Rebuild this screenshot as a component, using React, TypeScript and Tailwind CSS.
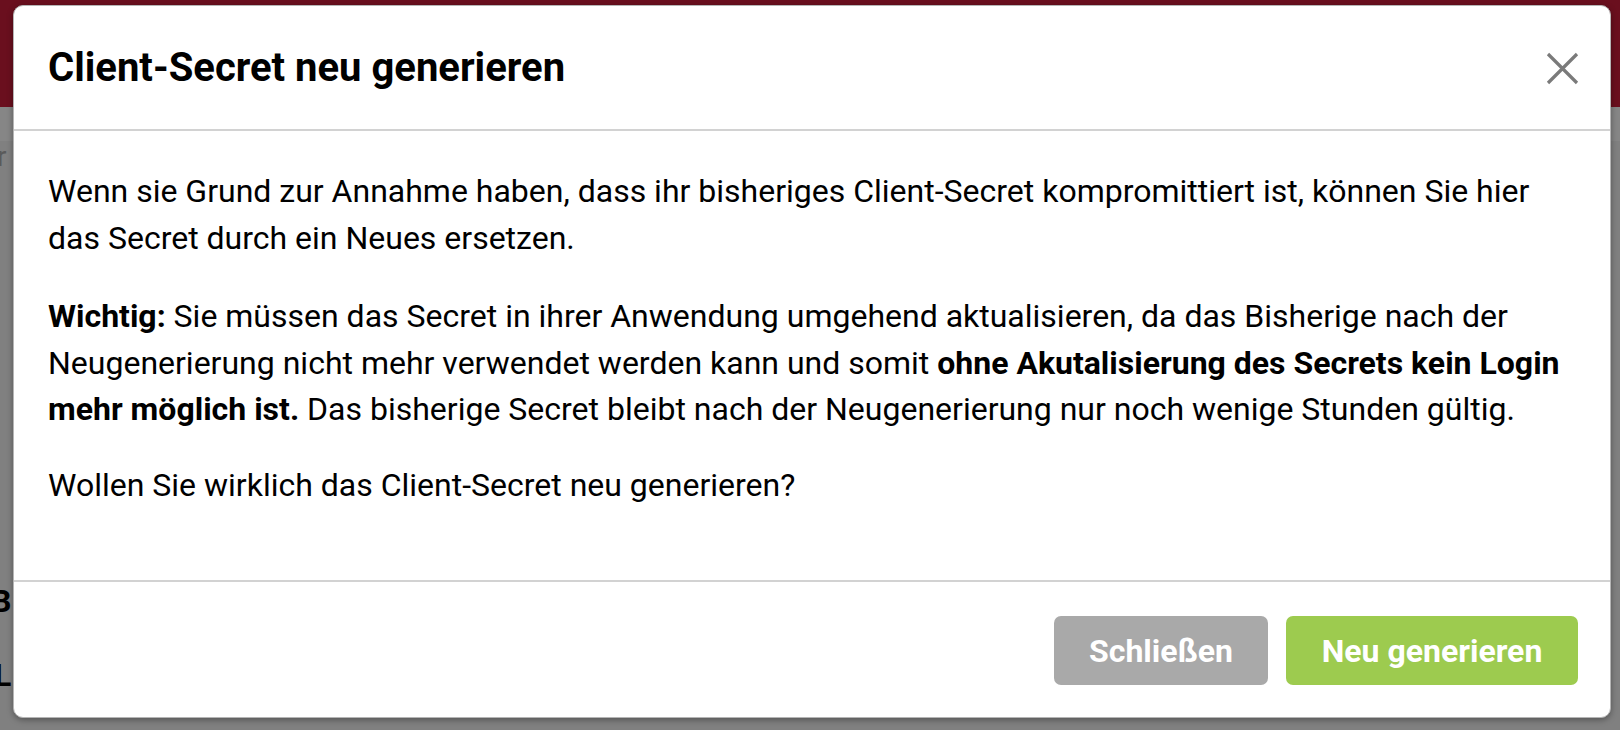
import React from "react";

export default function App() {
  return (
    <div className="relative w-[1620px] h-[730px] overflow-hidden bg-[#808080] font-['Roboto',_'Noto_Sans',_sans-serif]">
      {/* dimmed page behind the dialog */}
      <div className="flex flex-col h-full">
        <div className="h-[107px] bg-[#6a0f1e]" />
        <div className="h-[34px] bg-[#868686]" />
        <div className="flex-1 relative">
          <div className="mt-[2px] ml-[-3px] text-[28px] text-[#5a5a5a] leading-none">r</div>
          <div className="mt-[414px] ml-[-9px] text-[32px] font-bold text-black leading-none">B</div>
          <div className="mt-[42px] ml-[-6px] text-[32px] font-bold text-black leading-none">L</div>
        </div>
      </div>

      {/* dialog */}
      <div className="absolute left-[13px] top-[5px] w-[1598px] h-[713px] rounded-[10px] border border-[#b5b5b5] bg-white shadow-[0_2px_6px_rgba(0,0,0,0.35)] flex flex-col text-black">
        <div className="h-[125px] shrink-0 border-b-2 border-[#d2d2d2] flex items-center justify-between pl-[34px] pr-[31px]">
          <h1 className="text-[40px] font-bold leading-none">Client-Secret neu generieren</h1>
          <svg width="33" height="33" viewBox="0 0 33 33" className="mt-[2px]">
            <path d="M2 2 L31 31 M31 2 L2 31" stroke="#7a7a7a" strokeWidth="3.2" strokeLinecap="butt" />
          </svg>
        </div>

        <div className="flex-1 pl-[34px] pr-[30px] pt-[37px] text-[32px] leading-[46.5px]">
          <p className="mb-[32px] whitespace-nowrap">
            Wenn sie Grund zur Annahme haben, dass ihr bisheriges Client-Secret kompromittiert ist, können Sie hier
            <br />
            das Secret durch ein Neues ersetzen.
          </p>
          <p className="mb-[29px] whitespace-nowrap">
            <strong className="font-bold">Wichtig:</strong> Sie müssen das Secret in ihrer Anwendung umgehend aktualisieren, da das Bisherige nach der
            <br />
            Neugenerierung nicht mehr verwendet werden kann und somit <strong className="font-bold">ohne Akutalisierung des Secrets kein Login</strong>
            <br />
            <strong className="font-bold">mehr möglich ist.</strong> Das bisherige Secret bleibt nach der Neugenerierung nur noch wenige Stunden gültig.
          </p>
          <p className="whitespace-nowrap">Wollen Sie wirklich das Client-Secret neu generieren?</p>
        </div>

        <div className="h-[137px] shrink-0 border-t-2 border-[#d2d2d2] flex items-start justify-end gap-[18px] pt-[34px] pr-[32px]">
          <button className="w-[214px] h-[69px] rounded-[7px] bg-[#a9a9a9] text-white text-[32px] font-bold">Schließen</button>
          <button className="w-[292px] h-[69px] rounded-[7px] bg-[#9dcb4f] text-white text-[32px] font-bold">Neu generieren</button>
        </div>
      </div>
    </div>
  );
}
